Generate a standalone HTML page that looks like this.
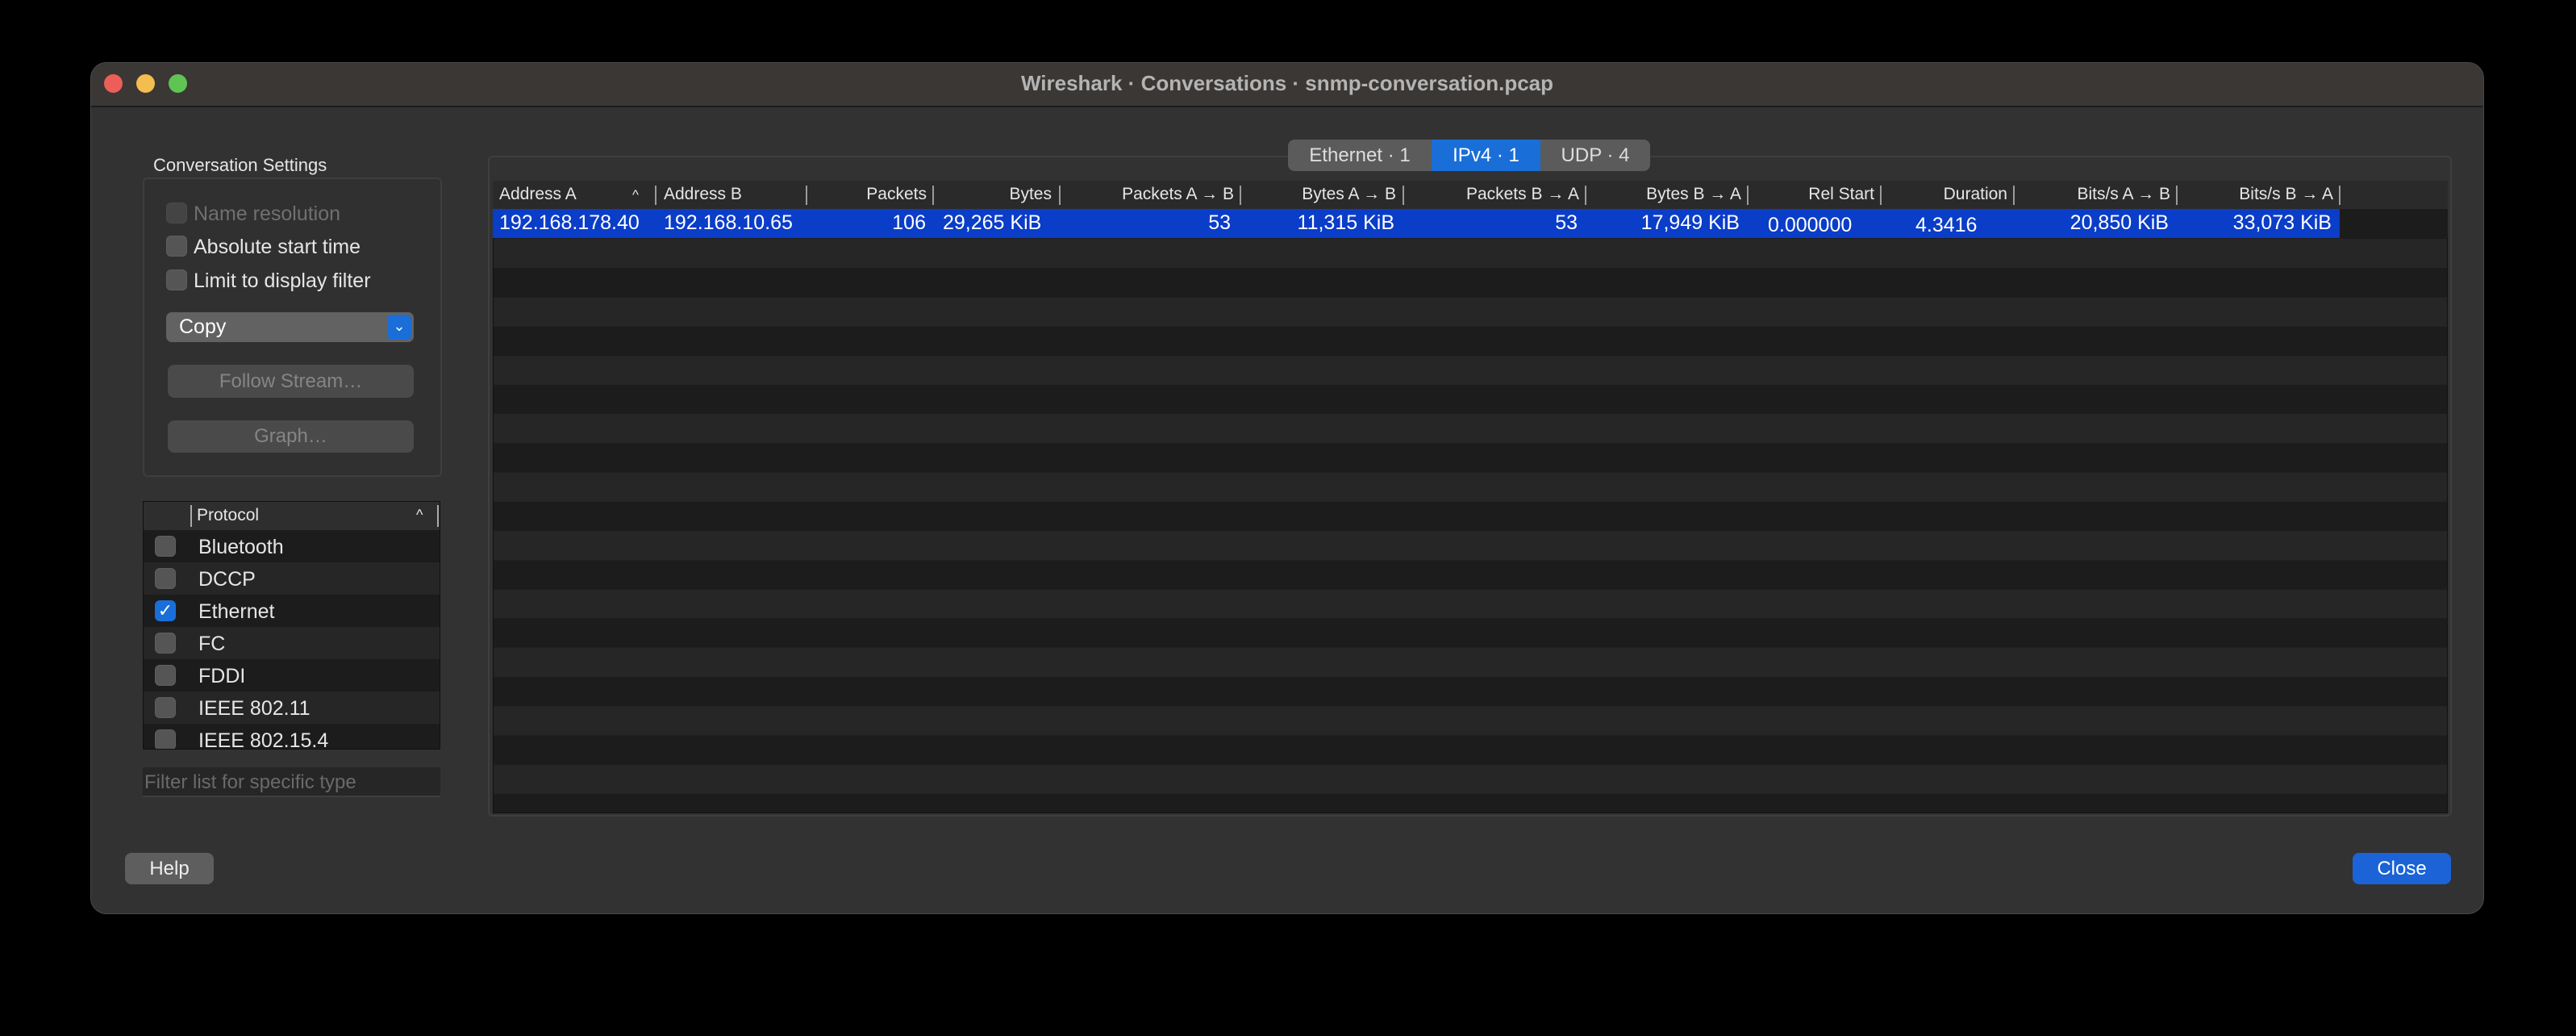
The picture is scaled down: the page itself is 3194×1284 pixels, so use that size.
<!DOCTYPE html>
<html><head><meta charset="utf-8"><style>
*{box-sizing:border-box;margin:0;padding:0}
body{width:3194px;height:1284px;background:#000;position:relative;overflow:hidden;font-family:"Liberation Sans",sans-serif;color:#e6e6e6}
.a{position:absolute}
.win{left:112px;top:77px;width:2968px;height:1056px;background:#323232;border-radius:20px;border:1px solid #4a4a4a;overflow:hidden}
.tb{left:0;top:0;width:100%;height:55px;background:#3a3735;border-bottom:2px solid #1c1c1c}
.dot{width:23px;height:23px;border-radius:50%;top:14px}
.cb{width:26px;height:26px;border-radius:6px;background:#555;border:1px solid #5e5e5e}
.t25{font-size:25px;white-space:nowrap}
.btn{border-radius:8px;background:#4e4e4e;text-align:center;font-size:24px}
.hd{font-size:21px;white-space:nowrap;top:229px}
.sep{width:2px;height:24px;background:#9a9a9a;top:230px}
.dv{font-size:25px;top:262px;white-space:nowrap;color:#fff}
</style></head><body>
<div class="a win">
 <div class="a tb"></div>
 <div class="a dot" style="left:16px;background:#ec5f58"></div>
 <div class="a dot" style="left:56px;background:#f4bd4f"></div>
 <div class="a dot" style="left:96px;background:#5fc453"></div>
</div>
<div class="a" style="left:112px;top:88px;width:2968px;text-align:center;font-size:26px;font-weight:bold;color:#b4b4b4">Wireshark · Conversations · snmp-conversation.pcap</div>

<div class="a" style="left:190px;top:192px;font-size:22px">Conversation Settings</div>
<div class="a" style="left:177px;top:220px;width:371px;height:371px;border:2px solid #3e3e3e;border-radius:6px;background:#303030"></div>
<div class="a cb" style="left:206px;top:251px;background:#444;border-color:#4a4a4a"></div>
<div class="a t25" style="left:240px;top:251px;color:#707070">Name resolution</div>
<div class="a cb" style="left:206px;top:292px"></div>
<div class="a t25" style="left:240px;top:292px">Absolute start time</div>
<div class="a cb" style="left:206px;top:334px"></div>
<div class="a t25" style="left:240px;top:334px">Limit to display filter</div>
<div class="a" style="left:206px;top:387px;width:307px;height:37px;border-radius:7px;background:#626262;font-size:25px;padding:4px 16px;color:#fff">Copy</div>
<div class="a" style="left:480px;top:390px;width:30px;height:31px;border-radius:6px;background:#1a6ed8;color:#fff;font-size:18px;text-align:center;line-height:28px">⌄</div>
<div class="a btn" style="left:208px;top:452px;width:305px;height:41px;line-height:41px;color:#858585;background:#4a4a4a">Follow Stream…</div>
<div class="a btn" style="left:208px;top:521px;width:305px;height:40px;line-height:40px;color:#858585;background:#4a4a4a">Graph…</div>

<div class="a" style="left:177px;top:621px;width:369px;height:308px;background:#1c1c1c;border:1px solid #111;overflow:hidden">
 <div class="a" style="left:0;top:0;width:100%;height:35px;background:#2e2e2e"></div>
 <div class="a" style="left:58px;top:4px;width:2px;height:27px;background:#aaa"></div>
 <div class="a" style="left:66px;top:5px;font-size:21px">Protocol</div>
 <div class="a" style="left:338px;top:6px;font-size:18px">^</div>
 <div class="a" style="left:364px;top:4px;width:2px;height:27px;background:#aaa"></div>
 <div class="a" style="left:0;top:75px;width:100%;height:40px;background:#262626"></div>
 <div class="a" style="left:0;top:155px;width:100%;height:40px;background:#262626"></div>
 <div class="a" style="left:0;top:235px;width:100%;height:40px;background:#262626"></div>
 <div class="a cb" style="left:14px;top:42px"></div><div class="a t25" style="left:68px;top:42px">Bluetooth</div>
 <div class="a cb" style="left:14px;top:82px"></div><div class="a t25" style="left:68px;top:82px">DCCP</div>
 <div class="a cb" style="left:14px;top:122px;background:#1a6ed8;border-color:#1a6ed8;color:#fff;font-size:22px;line-height:24px;text-align:center">✓</div><div class="a t25" style="left:68px;top:122px">Ethernet</div>
 <div class="a cb" style="left:14px;top:162px"></div><div class="a t25" style="left:68px;top:162px">FC</div>
 <div class="a cb" style="left:14px;top:202px"></div><div class="a t25" style="left:68px;top:202px">FDDI</div>
 <div class="a cb" style="left:14px;top:242px"></div><div class="a t25" style="left:68px;top:242px">IEEE 802.11</div>
 <div class="a cb" style="left:14px;top:282px"></div><div class="a t25" style="left:68px;top:282px">IEEE 802.15.4</div>
</div>
<div class="a" style="left:177px;top:951px;width:369px;height:37px;background:#262626;border-bottom:2px solid #3e3e3e;font-size:24px;color:#6a6a6a;padding:5px 2px">Filter list for specific type</div>

<div class="a btn" style="left:155px;top:1057px;width:110px;height:39px;line-height:39px;background:#5e5e5e;color:#eee">Help</div>
<div class="a btn" style="left:2917px;top:1057px;width:122px;height:39px;line-height:39px;background:#1b63d6;color:#fff">Close</div>

<div class="a" style="left:605px;top:193px;width:2435px;height:819px;border:2px solid #3f3f3f;border-radius:6px;background:#323232"></div>
<div class="a" style="left:611px;top:224px;width:2424px;height:784px;background:repeating-linear-gradient(to bottom,#262626 0,#262626 36.2px,#1c1c1c 36.2px,#1c1c1c 72.4px);background-position:0 71px;border:1px solid #111"></div>
<div class="a" style="left:611px;top:224px;width:2424px;height:35px;background:#2a2a2a"></div>
<div class="a" style="left:611px;top:259px;width:2424px;height:36px;background:#1c1c1c"></div>
<div class="a" style="left:611px;top:259px;width:2290px;height:36px;background:#0a3dc8"></div>

<div class="a" style="left:1597px;top:173px;width:449px;height:39px;border-radius:8px;background:#5b5b5b;overflow:hidden;font-size:24px;line-height:39px;color:#ddd">
 <div class="a" style="left:0;width:178px;text-align:center">Ethernet · 1</div>
 <div class="a" style="left:178px;width:135px;background:#1a6ed8;color:#fff;text-align:center;height:39px">IPv4 · 1</div>
 <div class="a" style="left:313px;width:136px;text-align:center">UDP · 4</div>
</div>

<div class="a hd" style="left:619px">Address A</div><div class="a hd" style="left:784px;font-size:17px;top:232px">^</div><div class="a sep" style="left:812px"></div>
<div class="a hd" style="left:823px">Address B</div><div class="a sep" style="left:999px"></div>
<div class="a hd" style="right:2045px">Packets</div><div class="a sep" style="left:1156px"></div>
<div class="a hd" style="right:1890px">Bytes</div><div class="a sep" style="left:1313px"></div>
<div class="a hd" style="right:1664px">Packets A → B</div><div class="a sep" style="left:1537px"></div>
<div class="a hd" style="right:1463px">Bytes A → B</div><div class="a sep" style="left:1739px"></div>
<div class="a hd" style="right:1236px">Packets B → A</div><div class="a sep" style="left:1965px"></div>
<div class="a hd" style="right:1035px">Bytes B → A</div><div class="a sep" style="left:2166px"></div>
<div class="a hd" style="right:870px">Rel Start</div><div class="a sep" style="left:2331px"></div>
<div class="a hd" style="right:705px">Duration</div><div class="a sep" style="left:2496px"></div>
<div class="a hd" style="right:503px">Bits/s A → B</div><div class="a sep" style="left:2698px"></div>
<div class="a hd" style="right:301px">Bits/s B → A</div><div class="a sep" style="left:2900px"></div>

<div class="a dv" style="left:619px">192.168.178.40</div>
<div class="a dv" style="left:823px">192.168.10.65</div>
<div class="a dv" style="right:2046px">106</div>
<div class="a dv" style="left:1169px">29,265 KiB</div>
<div class="a dv" style="right:1668px">53</div>
<div class="a dv" style="right:1465px">11,315 KiB</div>
<div class="a dv" style="right:1238px">53</div>
<div class="a dv" style="right:1037px">17,949 KiB</div>
<div class="a dv" style="left:2192px;top:265px">0.000000</div>
<div class="a dv" style="left:2375px;top:265px">4.3416</div>
<div class="a dv" style="right:505px">20,850 KiB</div>
<div class="a dv" style="right:303px">33,073 KiB</div>
</body></html>
